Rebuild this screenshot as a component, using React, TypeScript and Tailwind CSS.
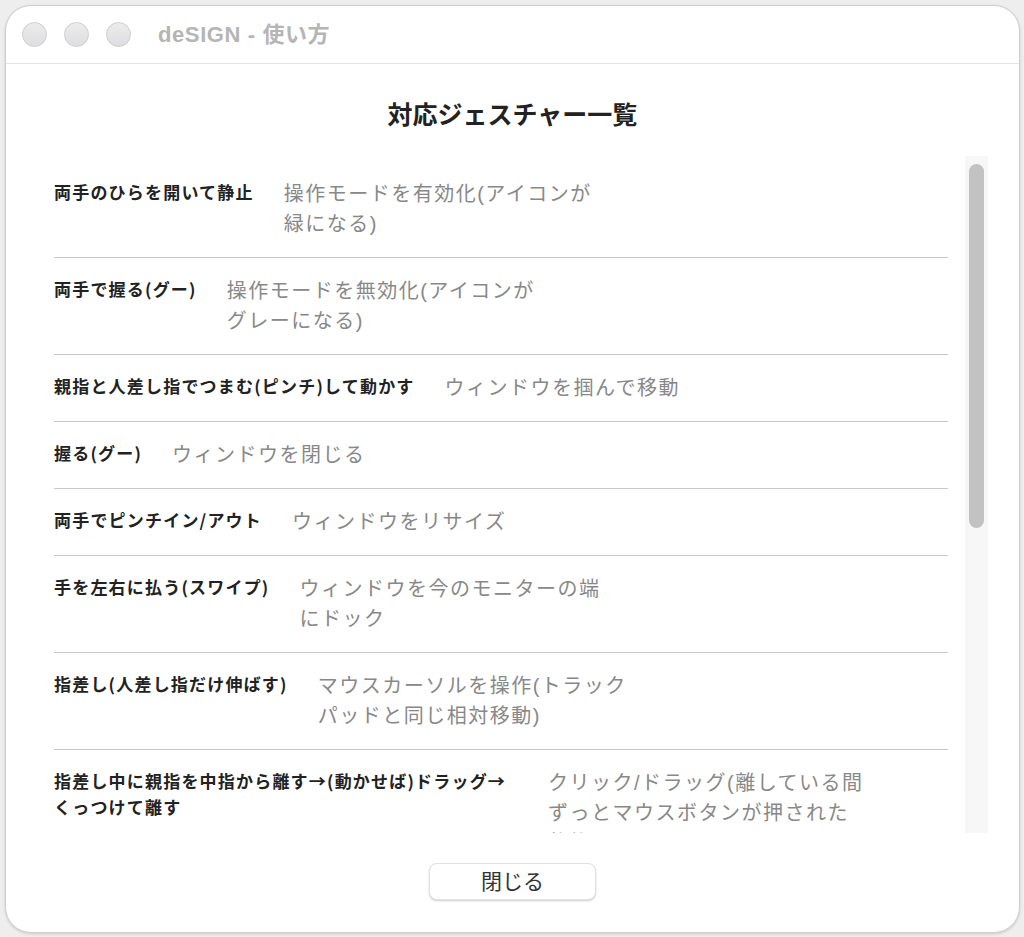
const gestures: { label: string; desc: string }[] = [
  { label: "両手のひらを開いて静止", desc: "操作モードを有効化(アイコンが緑になる)" },
  { label: "両手で握る(グー)", desc: "操作モードを無効化(アイコンがグレーになる)" },
  { label: "親指と人差し指でつまむ(ピンチ)して動かす", desc: "ウィンドウを掴んで移動" },
  { label: "握る(グー)", desc: "ウィンドウを閉じる" },
  { label: "両手でピンチイン/アウト", desc: "ウィンドウをリサイズ" },
  { label: "手を左右に払う(スワイプ)", desc: "ウィンドウを今のモニターの端にドック" },
  { label: "指差し(人差し指だけ伸ばす)", desc: "マウスカーソルを操作(トラックパッドと同じ相対移動)" },
  {
    label: "指差し中に親指を中指から離す→(動かせば)ドラッグ→くっつけて離す",
    desc: "クリック/ドラッグ(離している間ずっとマウスボタンが押された状態になる)",
  },
];

function TrafficLight() {
  return (
    <span className="h-[25px] w-[25px] rounded-full border border-[#cdcdcf] bg-gradient-to-b from-[#ececee] to-[#dedee0]" />
  );
}

export default function App() {
  return (
    <div
      className="h-[937px] w-full overflow-hidden bg-[#eeeeee] pb-[4px] pl-[5px] pr-[4px] pt-[5px]"
      style={{ fontFamily: '"Liberation Sans", "Noto Sans CJK JP", sans-serif' }}
    >
      <div className="flex h-full flex-col overflow-hidden rounded-[26px] border border-[#cfcfcf] bg-white shadow-[0_1px_3px_rgba(0,0,0,0.15)]">
        {/* title bar */}
        <div className="flex h-[58px] shrink-0 items-center border-b border-[#e6e6e6] pl-[16px]">
          <div className="flex gap-[17px]">
            <TrafficLight />
            <TrafficLight />
            <TrafficLight />
          </div>
          <span className="ml-[27px] text-[22px] font-bold tracking-[0.6px] text-[#b5b5b5]">
            deSIGN - 使い方
          </span>
        </div>

        <h1 className="mt-[34px] text-center text-[25px] font-bold leading-[34px] text-[#222222]">
          対応ジェスチャー一覧
        </h1>

        <div className="ml-[48px] mr-[31px] mt-[24px] flex h-[677px] shrink-0">
          <div className="flex-1 overflow-hidden pt-[5px]">
            {gestures.map((g) => (
              <div
                key={g.label}
                className="flex items-start gap-[30px] border-b border-[#c9c9c9] py-[18px]"
              >
                <div
                  className="max-w-[464px] shrink-0 text-[17px] font-bold leading-[26px] tracking-[1.2px] text-[#222222]"
                  style={{ fontFamily: '"Noto Sans CJK JP", "Liberation Sans", sans-serif' }}
                >
                  {g.label}
                </div>
                <div className="max-w-[316px] text-[20px] leading-[30px] tracking-[1.5px] text-[#888888]">
                  {g.desc}
                </div>
              </div>
            ))}
          </div>
          <div className="ml-[17px] w-[23px] bg-[#f7f7f7] pt-[8px]">
            <div className="mx-auto h-[364px] w-[15px] rounded-full bg-[#c2c2c2]" />
          </div>
        </div>

        <div className="flex justify-center pt-[30px]">
          <button
            type="button"
            className="h-[37px] w-[167px] rounded-[8px] border border-[#e2e2e2] bg-white text-[21px] text-[#333333] shadow-[0_1px_2px_rgba(0,0,0,0.2)]"
          >
            閉じる
          </button>
        </div>
      </div>
    </div>
  );
}
